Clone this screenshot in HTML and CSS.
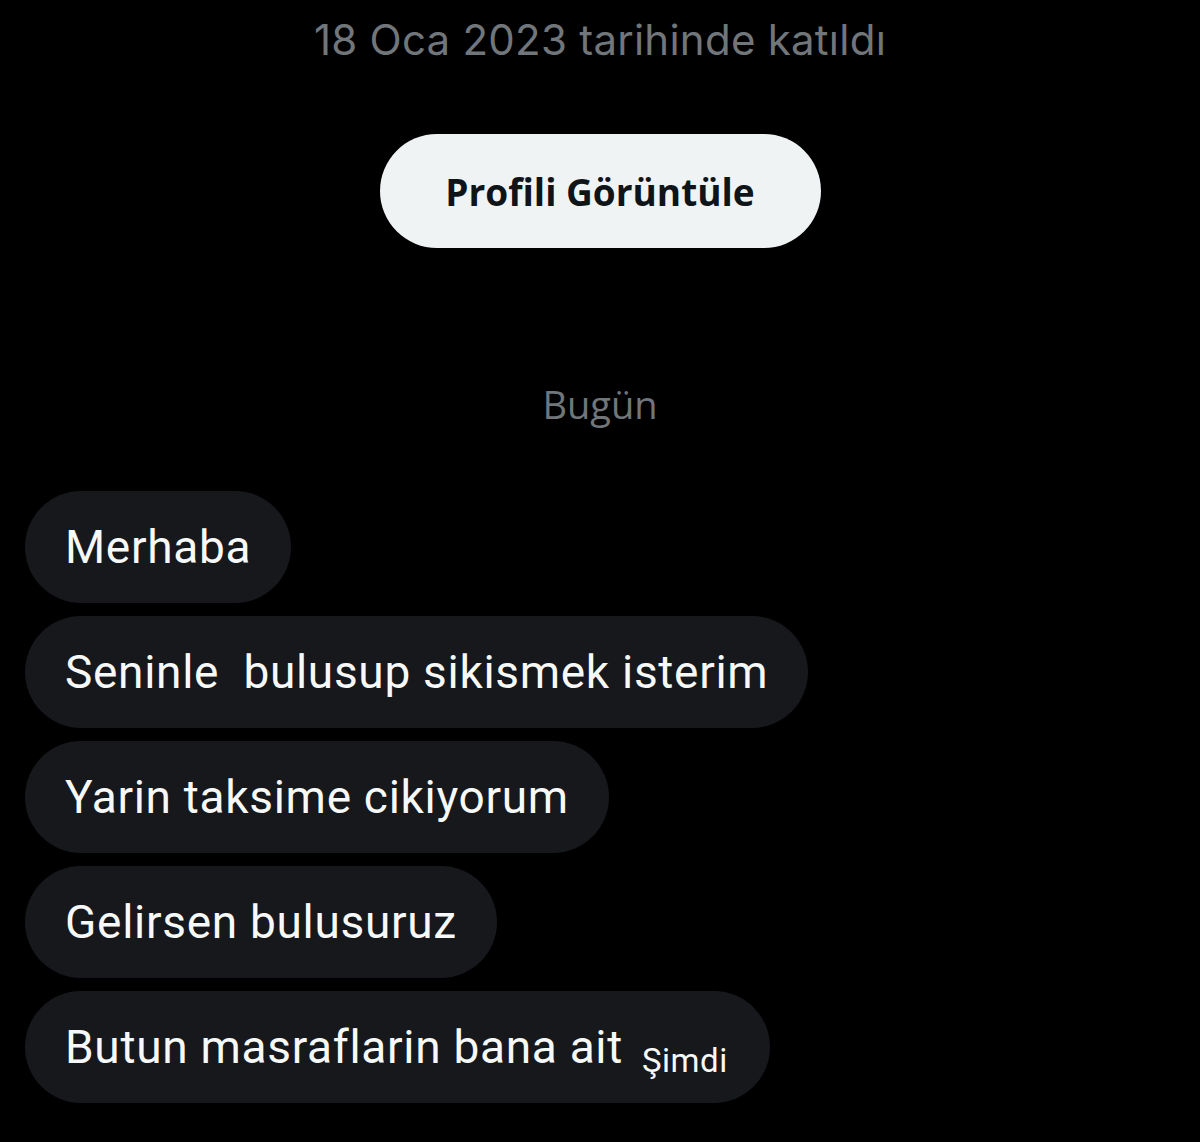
FILE: index.html
```html
<!DOCTYPE html>
<html lang="tr">
<head>
<meta charset="utf-8">
<title>Mesajlar</title>
<link rel="stylesheet" href="styles.css">
</head>
<body>
<div class="page">
  <header class="profile">
    <p class="joined">18 Oca 2023 tarihinde katıldı</p>
    <button class="view-btn"><span>Profili Görüntüle</span></button>
  </header>
  <div class="day">Bugün</div>
  <ul class="messages">
    <li class="bubble">Merhaba</li>
    <li class="bubble">Seninle&nbsp; bulusup sikismek isterim</li>
    <li class="bubble">Yarin taksime cikiyorum</li>
    <li class="bubble">Gelirsen bulusuruz</li>
    <li class="bubble last">Butun masraflarin bana ait<span class="time">Şimdi</span></li>
  </ul>
</div>
</body>
</html>
```
FILE: styles.css
```css
html, body {
  margin: 0;
  padding: 0;
  background: #000;
}
.page {
  width: 1200px;
  height: 1142px;
  overflow: hidden;
  display: flex;
  flex-direction: column;
}
.profile {
  display: flex;
  flex-direction: column;
  align-items: center;
}
.joined {
  margin: 14px 0 0;
  font-family: Inter, "Noto Sans", sans-serif;
  font-size: 42px;
  line-height: 52px;
  letter-spacing: 0.25px;
  color: #71767b;
}
.view-btn {
  margin-top: 68px;
  width: 441px;
  height: 114px;
  border: none;
  border-radius: 57px;
  background: #eff3f4;
  display: flex;
  align-items: center;
  justify-content: center;
  padding: 0;
}
.view-btn span {
  font-family: "Open Sans", "Noto Sans", sans-serif;
  font-weight: 700;
  font-size: 37px;
  letter-spacing: 0;
  color: #0f1419;
}
.day {
  margin-top: 134px;
  text-align: center;
  font-family: "Open Sans", "Noto Sans", sans-serif;
  font-size: 38px;
  line-height: 44px;
  color: #71767b;
}
.messages {
  list-style: none;
  margin: 65px 0 0 25px;
  padding: 0;
  display: flex;
  flex-direction: column;
  align-items: flex-start;
  gap: 13px;
}
.bubble {
  background: #16181c;
  border-radius: 56px;
  height: 112px;
  box-sizing: border-box;
  padding: 0 40px;
  display: flex;
  align-items: center;
  font-family: Roboto, "Noto Sans", sans-serif;
  font-size: 46px;
  letter-spacing: 0.7px;
  color: #f7f9f9;
  white-space: pre;
}
.last {
  padding-right: 42px;
}
.time {
  font-family: Roboto, "Noto Sans", sans-serif;
  font-size: 33px;
  letter-spacing: 0.5px;
  margin-left: 19px;
  margin-top: 26px;
  color: #f7f9f9;
}
```
